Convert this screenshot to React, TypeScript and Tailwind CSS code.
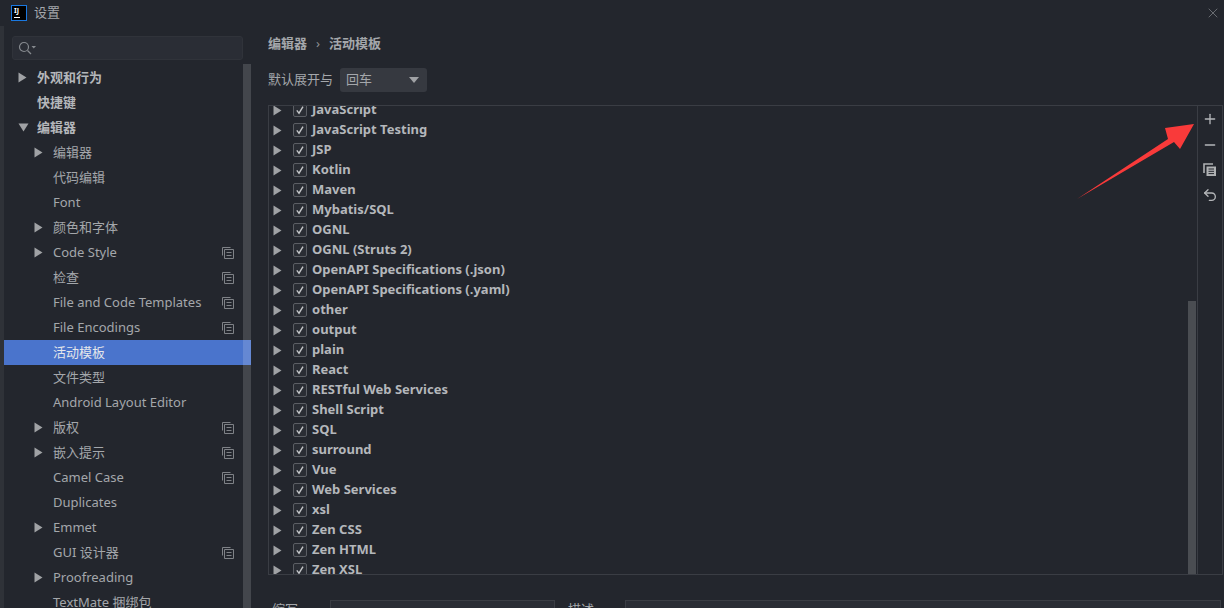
import { Plus, Minus, Undo2, X } from "lucide-react";

const FONT = "font-['Noto_Sans','Noto_Sans_CJK_SC',sans-serif]";

type NavItem = { label: string; depth: 0 | 1; arrow?: "right" | "down"; bold?: boolean; copy?: boolean; active?: boolean };

const navItems: NavItem[] = [
  { label: "外观和行为", depth: 0, arrow: "right", bold: true },
  { label: "快捷键", depth: 0, bold: true },
  { label: "编辑器", depth: 0, arrow: "down", bold: true },
  { label: "编辑器", depth: 1, arrow: "right" },
  { label: "代码编辑", depth: 1 },
  { label: "Font", depth: 1 },
  { label: "颜色和字体", depth: 1, arrow: "right" },
  { label: "Code Style", depth: 1, arrow: "right", copy: true },
  { label: "检查", depth: 1, copy: true },
  { label: "File and Code Templates", depth: 1, copy: true },
  { label: "File Encodings", depth: 1, copy: true },
  { label: "活动模板", depth: 1, active: true },
  { label: "文件类型", depth: 1 },
  { label: "Android Layout Editor", depth: 1 },
  { label: "版权", depth: 1, arrow: "right", copy: true },
  { label: "嵌入提示", depth: 1, arrow: "right", copy: true },
  { label: "Camel Case", depth: 1, copy: true },
  { label: "Duplicates", depth: 1 },
  { label: "Emmet", depth: 1, arrow: "right" },
  { label: "GUI 设计器", depth: 1, copy: true },
  { label: "Proofreading", depth: 1, arrow: "right" },
  { label: "TextMate 捆绑包", depth: 1 },
];

const templates = [
  "JavaScript Testing", "JSP", "Kotlin", "Maven", "Mybatis/SQL", "OGNL", "OGNL (Struts 2)",
  "OpenAPI Specifications (.json)", "OpenAPI Specifications (.yaml)", "other", "output", "plain",
  "React", "RESTful Web Services", "Shell Script", "SQL", "surround", "Vue", "Web Services", "xsl",
  "Zen CSS", "Zen HTML", "Zen XSL",
];

function RightArrow() {
  return (
    <svg width="9" height="11" viewBox="0 0 9 11" className="shrink-0">
      <path d="M0.5 0.5 L8.5 5.5 L0.5 10.5 Z" fill="#a0a2a5" />
    </svg>
  );
}

function DownArrow() {
  return (
    <svg width="11" height="9" viewBox="0 0 11 9" className="shrink-0">
      <path d="M0.5 0.5 L10.5 0.5 L5.5 8.5 Z" fill="#a0a2a5" />
    </svg>
  );
}

function ProjectIcon() {
  return (
    <svg width="12" height="12" viewBox="0 0 12 12" fill="none" stroke="#7f8287" strokeWidth="1" className="shrink-0">
      <path d="M0.5 8.5 V0.5 H8.5" />
      <path d="M2.5 2.5 H11.5 V11.5 H2.5 Z" />
      <path d="M4.5 5.5 H9.5 M4.5 8.5 H9.5" />
    </svg>
  );
}

function CopyIcon() {
  return (
    <svg width="14" height="14" viewBox="0 0 14 14" fill="none" className="shrink-0">
      <path d="M1 10 V1 H10" stroke="#afb1b3" strokeWidth="1.6" />
      <path d="M3.5 3.5 H13 V13 H3.5 Z" fill="#afb1b3" />
      <path d="M5.5 6 H11 M5.5 8.3 H11 M5.5 10.6 H11" stroke="#23262d" strokeWidth="1" />
    </svg>
  );
}

function Check() {
  return (
    <span className="flex h-[14px] w-[14px] shrink-0 items-center justify-center rounded-[2px] border border-[#5b5e64] bg-[#2a2d34]">
      <svg width="10" height="10" viewBox="0 0 10 10" fill="none" stroke="#c4c6c9" strokeWidth="1.4">
        <path d="M1.8 5.4 L4 8.2 L8 1.6" />
      </svg>
    </span>
  );
}

function NavRow({ item }: { item: NavItem }) {
  return (
    <div className={`flex h-[25px] items-center ${item.active ? "bg-[#4a74cc]" : ""}`}>
      <span className={`flex shrink-0 items-center ${item.depth === 0 ? "w-[33px] pl-[14px]" : "w-[49px] pl-[30px]"}`}>
        {item.arrow === "right" && <RightArrow />}
        {item.arrow === "down" && <DownArrow />}
      </span>
      <span className={`flex-1 text-[13px] whitespace-nowrap ${item.bold ? "font-bold text-[#b4b7bb]" : item.active ? "text-[#e4e6ea]" : "text-[#a4a7ab]"}`}>
        {item.label}
      </span>
      {item.copy && <span className="mr-[17px]"><ProjectIcon /></span>}
    </div>
  );
}

function TemplateRow({ label }: { label: string }) {
  return (
    <div className="flex h-5 shrink-0 items-center">
      <span className="ml-[4px] mr-[11px]"><RightArrow /></span>
      <Check />
      <span className="ml-[5px] text-[13px] font-bold whitespace-nowrap text-[#b4b7bb]">{label}</span>
    </div>
  );
}

export default function App() {
  return (
    <div className={`flex h-[608px] w-[1224px] flex-col overflow-hidden bg-[#23262d] ${FONT}`}>
      <header className="flex h-[26px] shrink-0 items-center pl-[11px] pr-[3px]">
        <span className="flex h-[16px] w-[16px] flex-col justify-between border border-[#1a78e0] bg-black px-[2px] py-[1px]">
          <span className="text-[7px] leading-[7px] font-bold text-white">IJ</span>
          <span className="mb-[1px] h-px w-[6px] bg-white" />
        </span>
        <span className="ml-[7px] flex-1 text-[13px] text-[#a4a7ab]">设置</span>
        <X size={16} strokeWidth={1} className="text-[#8d9094]" />
      </header>

      <div className="flex min-h-0 flex-1">
        <aside className="flex w-[251px] shrink-0 flex-col border-l-[4px] border-[#2f3238]">
          <div className="mt-[10px] ml-[8px] flex h-6 w-[231px] items-center rounded-[3px] border border-[#30333a] bg-[#2a2d35] pl-[5px]">
            <svg width="18" height="14" viewBox="0 0 18 14" fill="none" stroke="#868a8f" strokeWidth="1.2">
              <circle cx="6" cy="6" r="4.5" />
              <path d="M9.5 9.5 L13 13" />
              <path d="M13.5 5 H18 L15.75 7.5 Z" fill="#868a8f" stroke="none" />
            </svg>
          </div>
          <div className="relative mt-[4px] min-h-0 flex-1 overflow-hidden">
            <div className="absolute top-[0px] right-0 bottom-0 w-2 bg-[#ffffff26]" />
            <div className="pt-[1px]">
              {navItems.map((item, i) => (
                <NavRow key={i} item={item} />
              ))}
            </div>
          </div>
        </aside>

        <main className="flex min-w-0 flex-1 flex-col pl-[17px]">
          <div className="mt-[9px] flex h-[17px] items-center text-[13px] text-[#a4a7ab]">
            <span className="font-bold">编辑器</span>
            <span className="mx-[9px] text-[#8d9094]">›</span>
            <span className="font-bold">活动模板</span>
          </div>
          <div className="mt-[16px] flex items-center">
            <span className="text-[13px] text-[#a4a7ab]">默认展开与</span>
            <div className="ml-[7px] flex h-6 w-[87px] items-center justify-between rounded-[3px] bg-[#363940] pr-[8px] pl-[6px] text-[13px] text-[#a4a7ab]">
              回车
              <svg width="10" height="6" viewBox="0 0 10 6"><path d="M0 0 H10 L5 6 Z" fill="#a0a2a5" /></svg>
            </div>
          </div>

          <div className="mt-[13px] mr-[1px] flex h-[470px] shrink-0 border border-[#3a3d44]">
            <div className="relative min-w-0 flex-1 overflow-hidden">
              <div className="-mt-[3px] flex flex-col">
                <div className="-mt-[3px]"><TemplateRow label="JavaScript" /></div>
                {templates.map((t) => (
                  <TemplateRow key={t} label={t} />
                ))}
              </div>
              <div className="absolute top-[195px] right-[1px] bottom-0 w-2 bg-[#4a4d52]" />
            </div>
            <div className="flex w-[25px] shrink-0 flex-col items-center gap-[10px] border-l border-[#3a3d44] pt-[5px] text-[#b4b6b9]">
              <Plus size={16} strokeWidth={2} />
              <Minus size={16} strokeWidth={2} />
              <CopyIcon />
              <Undo2 size={16} strokeWidth={2} />
            </div>
          </div>

          <div className="mt-[25px] flex items-start text-[13px] text-[#a4a7ab]">
            <span className="ml-[4px] w-[58px]">缩写</span>
            <div className="h-6 w-[225px] border border-[#3a3d44] bg-[#2a2d35]" />
            <span className="ml-[13px] w-[57px]">描述</span>
            <div className="h-6 w-[596px] border border-[#3a3d44] bg-[#2a2d35]" />
          </div>
        </main>
      </div>

      <svg width="122" height="82" viewBox="0 0 122 82" className="absolute top-[121px] left-[1076px]">
        <path d="M1 78 L92 18 L89 7 L118 3 L104 28 L98 21 Z" fill="#f93a3a" />
      </svg>
    </div>
  );
}
